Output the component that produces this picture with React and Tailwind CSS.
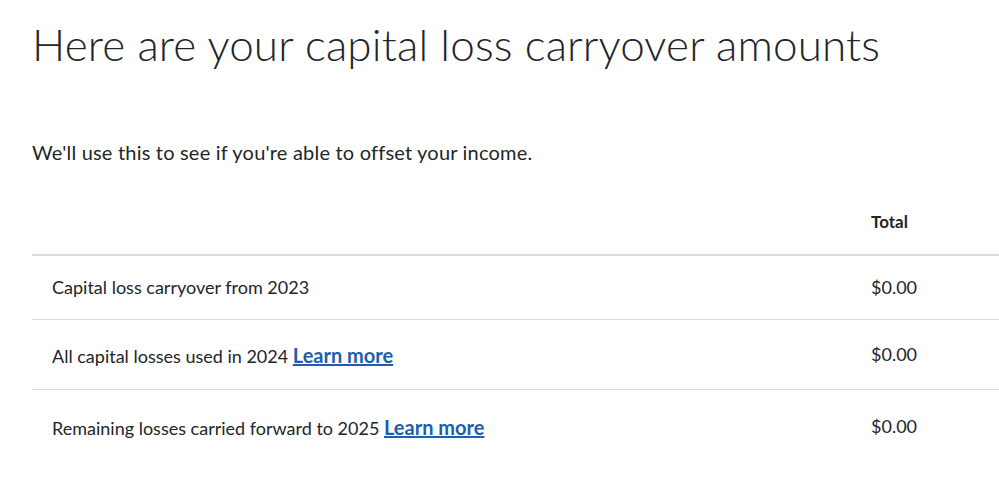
import React from "react";

const rows = [
  { label: "Capital loss carryover from 2023", link: false, value: "$0.00", h: "h-[65px]" },
  { label: "All capital losses used in 2024", link: true, value: "$0.00", h: "h-[70px]" },
  { label: "Remaining losses carried forward to 2025", link: true, value: "$0.00", h: "h-[74px]" },
];

export default function App() {
  return (
    <div className="min-h-screen bg-white pl-8 pt-[18px] text-[#21262a] font-['Lato',sans-serif]">
      <h1 className="text-[44px] leading-[52px] font-light tracking-[0.15px]">
        Here are your capital loss carryover amounts
      </h1>
      <p className="mt-[70px] text-[20px] leading-[24px] tracking-[0.2px]">
        We'll use this to see if you're able to offset your income.
      </p>
      <table className="mt-[29px] w-full border-collapse">
        <thead>
          <tr className="border-b-2 border-[#d5dde5]">
            <th></th>
            <th className="w-[128px] text-left text-[17px] font-bold pt-[16px] pb-[19px]">Total</th>
          </tr>
        </thead>
        <tbody>
          {rows.map((r, i) => (
            <tr key={i} className={i < rows.length - 1 ? "border-b border-[#d5dde5]" : ""}>
              <td className={`pl-5 text-[18px] ${r.h}`}>
                {r.label}{" "}
                {r.link && (
                  <a href="#" className="text-[#1b5fad] text-[20px] font-bold underline">Learn more</a>
                )}
              </td>
              <td className="text-[18px]">{r.value}</td>
            </tr>
          ))}
        </tbody>
      </table>
    </div>
  );
}
